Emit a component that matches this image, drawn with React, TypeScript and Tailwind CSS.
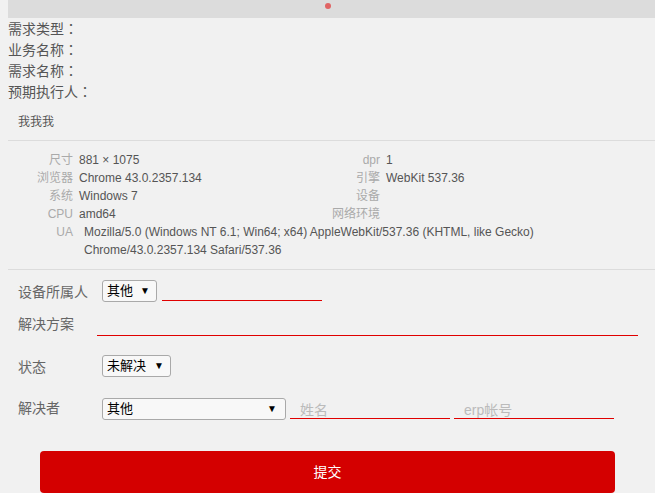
import { useState } from 'react'

const font = { fontFamily: '"Liberation Sans", "Noto Sans CJK SC", sans-serif' }
const cjk = { fontFamily: '"Noto Sans CJK SC", sans-serif' }
const colon = { fontFamily: '"Noto Sans CJK TC", sans-serif' }

function Arrow() {
  return <span className="text-[10px] leading-none text-black">▼</span>
}

function InfoRow({ label, value, w, h = 'h-[18px]' }: { label: string; value?: string; w: string; h?: string }) {
  return (
    <div className={`flex ${h} items-end`}>
      <span className={`${w} pr-[6px] text-right leading-[18px] text-[#aaa]`}>{label}</span>
      <span className="leading-[18px] text-[#555]">{value}</span>
    </div>
  )
}

function Summary({ label }: { label: string }) {
  return (
    <div>
      {label}
      <span style={colon}>：</span>
    </div>
  )
}

export default function App() {
  const [owner, setOwner] = useState('其他')

  return (
    <div className="min-h-[493px] w-[655px] overflow-hidden bg-[#f1f1f1]" style={font}>
      {/* top handle bar */}
      <div className="ml-[8px] flex h-[18px] justify-center bg-[#dcdcdc] pt-[3px]">
        <span className="ml-[-8px] block h-[6px] w-[6px] rounded-full bg-[#e06464]" />
      </div>

      {/* summary */}
      <div className="pl-[8px] text-[14px] leading-[21px] text-[#555]" style={cjk}>
        <Summary label="需求类型" />
        <Summary label="业务名称" />
        <Summary label="需求名称" />
        <Summary label="预期执行人" />
      </div>

      <div className="px-[18px] pt-[11px] pb-[9px] text-[12px] leading-[18px] text-[#555]">我我我</div>

      {/* device info */}
      <div className="ml-[8px] border-t border-[#dcdcdc] pt-[9px] pb-[10px] text-[12px]">
        <div className="flex">
          <div className="w-[300px]">
            <InfoRow h="h-[19px]" w="w-[71px]" label="尺寸" value="881 × 1075" />
            <InfoRow w="w-[71px]" label="浏览器" value="Chrome 43.0.2357.134" />
            <InfoRow w="w-[71px]" label="系统" value="Windows 7" />
            <InfoRow w="w-[71px]" label="CPU" value="amd64" />
          </div>
          <div className="w-[300px]">
            <InfoRow h="h-[19px]" w="w-[78px]" label="dpr" value="1" />
            <InfoRow w="w-[78px]" label="引擎" value="WebKit 537.36" />
            <InfoRow w="w-[78px]" label="设备" />
            <InfoRow w="w-[78px]" label="网络环境" />
          </div>
        </div>
        <div className="flex leading-[18px]">
          <span className="w-[76px] pr-[11px] text-right text-[#aaa]">UA</span>
          <span className="w-[470px] text-[#555]">
            Mozilla/5.0 (Windows NT 6.1; Win64; x64) AppleWebKit/537.36 (KHTML, like Gecko) Chrome/43.0.2357.134 Safari/537.36
          </span>
        </div>
      </div>

      {/* form */}
      <div className="ml-[8px] border-t border-[#dcdcdc] pl-[10px] pt-[10px] text-[14px] text-[#666]">
        <div className="flex h-[22px] items-start">
          <span className="w-[84px] leading-[24px]">设备所属人</span>
          <button
            onClick={() => setOwner(owner)}
            className="flex h-[22px] w-[55px] items-center justify-between rounded-[3px] border border-[#a9a9a9] bg-[#f8f8f8] pl-[4px] pr-[6px] text-[13px] text-black"
          >
            {owner}
            <Arrow />
          </button>
          <div className="mt-[20px] ml-[5px] h-px w-[160px] bg-[#e00000]" />
        </div>

        <div className="mt-[12px] flex h-[21px] items-start">
          <span className="w-[79px] leading-[21px]">解决方案</span>
          <div className="mt-[21px] h-px w-[541px] bg-[#e00000]" />
        </div>

        <div className="mt-[20px] flex h-[22px] items-start">
          <span className="w-[84px] leading-[24px]">状态</span>
          <div className="flex h-[22px] w-[69px] items-center justify-between rounded-[3px] border border-[#a9a9a9] bg-[#f8f8f8] pl-[4px] pr-[6px] text-[13px] text-black">
            未解决
            <Arrow />
          </div>
        </div>

        <div className="mt-[21px] flex h-[22px] items-start">
          <span className="w-[84px] leading-[20px]">解决者</span>
          <div className="flex h-[22px] w-[184px] items-center justify-between rounded-[3px] border border-[#a9a9a9] bg-[#f8f8f8] pl-[4px] pr-[8px] text-[13px] text-black">
            其他
            <Arrow />
          </div>
          <div className="ml-[4px] flex w-[160px] flex-col">
            <span className="h-[20px] pl-[10px] pt-[3px] text-[14px] leading-[18px] text-[#bbb]">姓名</span>
            <span className="h-px bg-[#e00000]" />
          </div>
          <div className="ml-[4px] flex w-[160px] flex-col">
            <span className="h-[20px] pl-[10px] pt-[3px] text-[14px] leading-[18px] text-[#bbb]">erp帐号</span>
            <span className="h-px bg-[#e00000]" />
          </div>
        </div>
      </div>

      <div className="flex justify-start pl-[40px] pt-[31px]">
        <button className="h-[42px] w-[575px] rounded-[4px] bg-[#d40000] text-[14px] text-white">提交</button>
      </div>
    </div>
  )
}
